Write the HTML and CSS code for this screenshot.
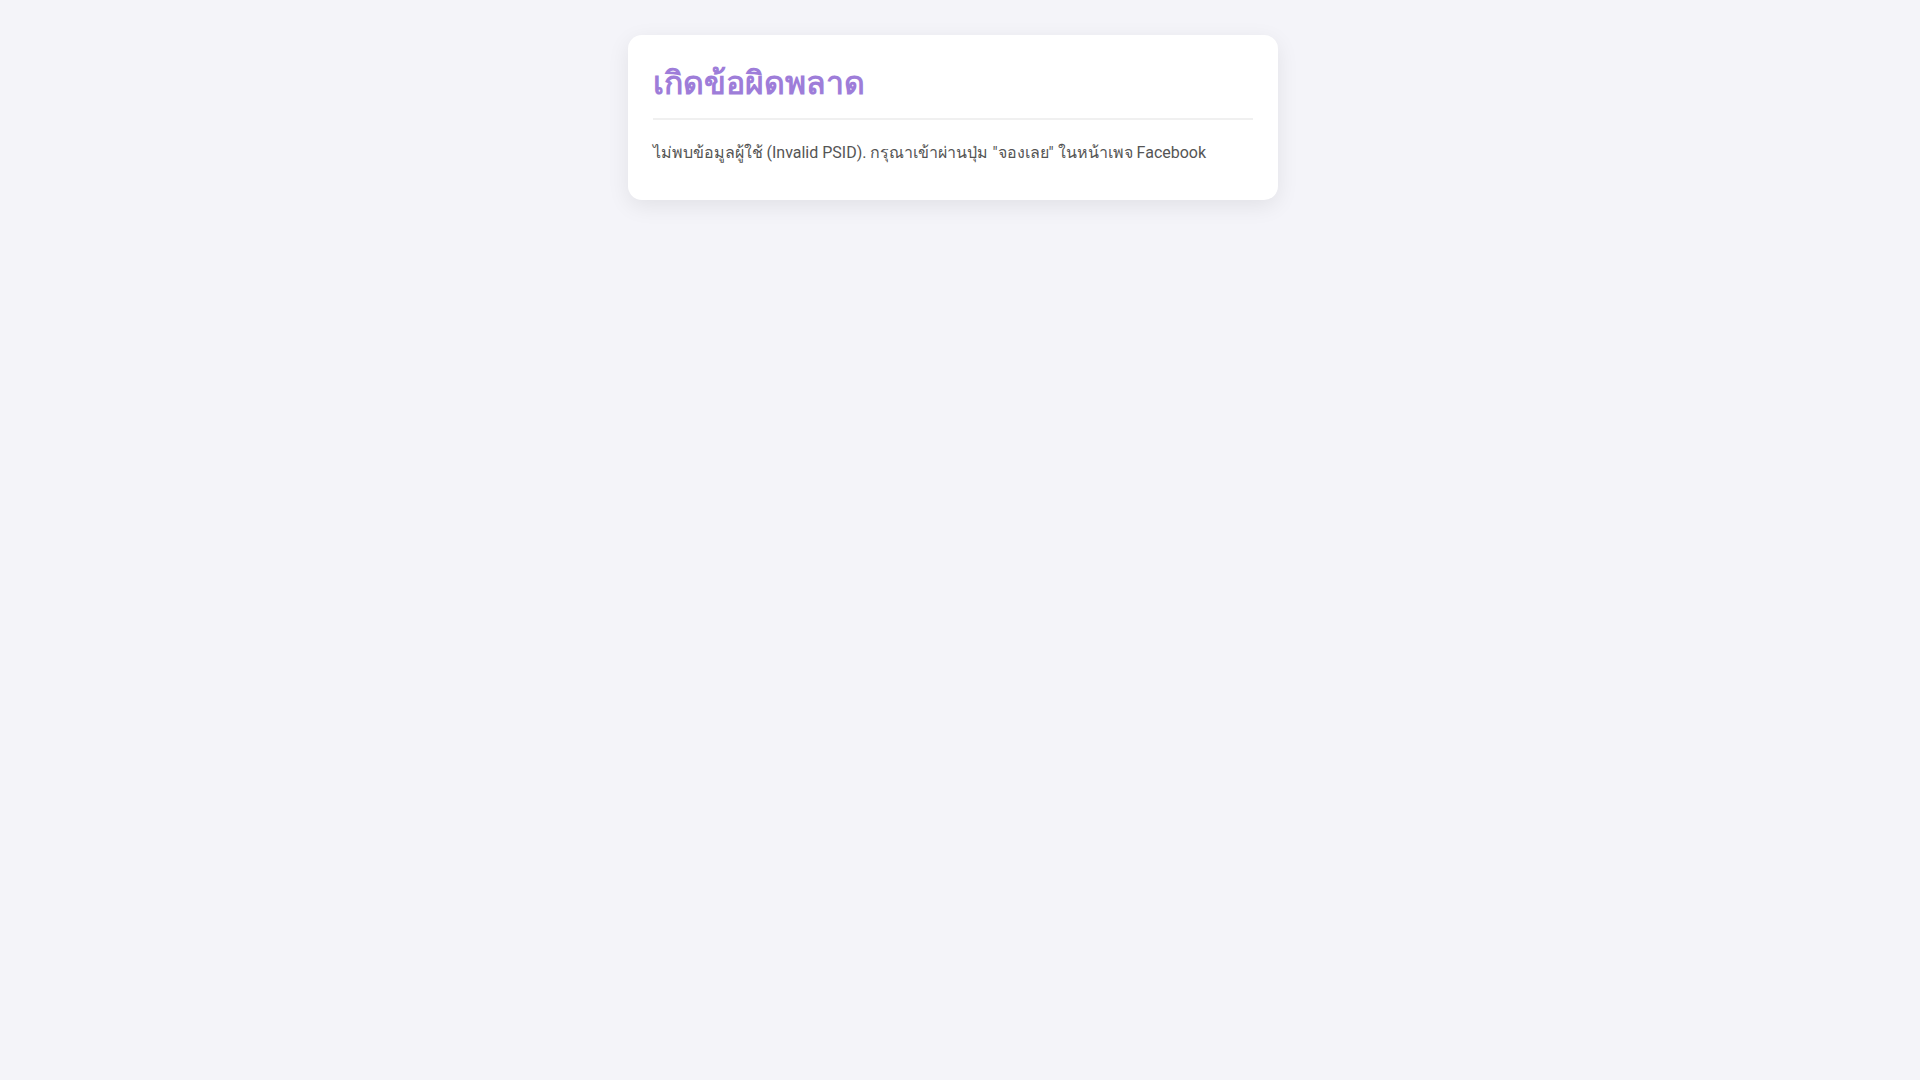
FILE: index.html
```html
<!DOCTYPE html>
<html lang="th">
<head>
    <meta charset="UTF-8">
    <meta name="viewport" content="width=device-width, initial-scale=1.0">
    <title>เกิดข้อผิดพลาด</title>
    <link rel="stylesheet" href="styles.css">
</head>
<body>
    <div class="container">
        <h1 class="error-title">เกิดข้อผิดพลาด</h1>
        <p class="error-message">ไม่พบข้อมูลผู้ใช้ (Invalid PSID). กรุณาเข้าผ่านปุ่ม "จองเลย" ในหน้าเพจ Facebook</p>
    </div>
</body>
</html>
```

FILE: styles.css
```css
body {
    font-family: Roboto, 'Noto Sans', sans-serif;
    background: #f4f4f9;
    margin: 0;
    padding: 15px 30px 15px 15px;
    min-height: 100vh;
}
.container {
    max-width: 600px;
    margin: 20px auto;
    background: #fff;
    padding: 25px;
    border-radius: 14px;
    box-shadow: 0 6px 22px rgba(0, 0, 0, 0.08);
}
.error-title {
    color: #9e7dd9;
    font-size: 32px;
    line-height: 46px;
    margin: 0;
    padding-bottom: 12px;
    border-bottom: 2px solid #f0f0f0;
}
.error-message {
    color: #555;
    font-size: 16px;
    line-height: 1.6;
    margin: 20px 0 9px;
}
```
